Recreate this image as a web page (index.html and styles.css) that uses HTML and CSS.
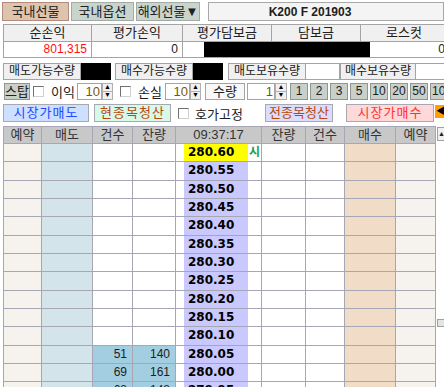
FILE: index.html
```html
<!DOCTYPE html>
<html lang="ko">
<head>
    <meta charset="UTF-8">
    <meta name="viewport" content="width=device-width, initial-scale=1.0">
    <title>선물 주문</title>
    <link rel="stylesheet" href="styles.css">
</head>
<body>

    <!-- Market tabs + code -->
    <div class="tabs">
        <div class="tab on">국내선물</div>
        <div class="tab opt">국내옵션</div>
        <div class="tab ovs">해외선물▼</div>
        <div class="code">K200 F 201903</div>
    </div>

    <!-- Account summary -->
    <div class="acct">
        <div class="hd">순손익</div>
        <div class="hd">평가손익</div>
        <div class="hd">평가담보금</div>
        <div class="hd">담보금</div>
        <div class="hd">로스컷</div>
        <div class="val red">801,315</div>
        <div class="val">0</div>
        <div class="val"></div>
        <div class="val"></div>
        <div class="val">0</div>
        <div class="mask"></div>
    </div>

    <!-- Available / held quantities -->
    <div class="qty">
        <div class="lbl">매도가능수량</div><div class="box dark"></div>
        <div class="lbl gap4">매수가능수량</div><div class="box dark"></div>
        <div class="lbl gap5">매도보유수량</div><div class="box w34"></div>
        <div class="lbl w76">매수보유수량</div><div class="box w40"></div>
    </div>

    <!-- Stop / quantity options -->
    <div class="opts">
        <div class="btn stop">스탑</div>
        <span class="chk c1"></span>
        <span class="txt t1">이익</span>
        <div class="field f1">10</div>
        <div class="spin"><span>▲</span><span>▼</span></div>
        <span class="chk c2"></span>
        <span class="txt t2">손실</span>
        <div class="field f2">10</div>
        <div class="spin"><span>▲</span><span>▼</span></div>
        <div class="tag">수량</div>
        <div class="field f3">1</div>
        <div class="spin s3"><span>▲</span><span>▼</span></div>
        <div class="steps">
            <div class="btn">1</div>
            <div class="btn">2</div>
            <div class="btn">3</div>
            <div class="btn">5</div>
            <div class="btn">10</div>
            <div class="btn">20</div>
            <div class="btn">50</div>
            <div class="btn">100</div>
        </div>
    </div>

    <!-- Order buttons -->
    <div class="orders">
        <div class="order sell">시장가매도</div>
        <div class="order cur">현종목청산</div>
        <span class="chk c3"></span>
        <span class="txt t3">호가고정</span>
        <div class="order all">전종목청산</div>
        <div class="order buy">시장가매수</div>
        <div class="side">◀</div>
    </div>

    <!-- Order book -->
    <div class="board">
        <div class="grid">
            <div class="h">예약</div><div class="h">매도</div><div class="h">건수</div><div class="h">잔량</div>
            <div class="h">09:37:17</div>
            <div class="h">잔량</div><div class="h">건수</div><div class="h">매수</div><div class="h">예약</div>

            <div class="rsv"></div><div class="ask"></div><div class="n"></div><div class="n"></div>
            <div class="px now"><b>280.60</b><i>시</i></div>
            <div class="n"></div><div class="n"></div><div class="bid"></div><div class="rsv"></div>

            <div class="rsv"></div><div class="ask"></div><div class="n"></div><div class="n"></div>
            <div class="px"><b>280.55</b><i></i></div>
            <div class="n"></div><div class="n"></div><div class="bid"></div><div class="rsv"></div>

            <div class="rsv"></div><div class="ask"></div><div class="n"></div><div class="n"></div>
            <div class="px"><b>280.50</b><i></i></div>
            <div class="n"></div><div class="n"></div><div class="bid"></div><div class="rsv"></div>

            <div class="rsv"></div><div class="ask"></div><div class="n"></div><div class="n"></div>
            <div class="px"><b>280.45</b><i></i></div>
            <div class="n"></div><div class="n"></div><div class="bid"></div><div class="rsv"></div>

            <div class="rsv"></div><div class="ask"></div><div class="n"></div><div class="n"></div>
            <div class="px"><b>280.40</b><i></i></div>
            <div class="n"></div><div class="n"></div><div class="bid"></div><div class="rsv"></div>

            <div class="rsv"></div><div class="ask"></div><div class="n"></div><div class="n"></div>
            <div class="px"><b>280.35</b><i></i></div>
            <div class="n"></div><div class="n"></div><div class="bid"></div><div class="rsv"></div>

            <div class="rsv"></div><div class="ask"></div><div class="n"></div><div class="n"></div>
            <div class="px"><b>280.30</b><i></i></div>
            <div class="n"></div><div class="n"></div><div class="bid"></div><div class="rsv"></div>

            <div class="rsv"></div><div class="ask"></div><div class="n"></div><div class="n"></div>
            <div class="px"><b>280.25</b><i></i></div>
            <div class="n"></div><div class="n"></div><div class="bid"></div><div class="rsv"></div>

            <div class="rsv"></div><div class="ask"></div><div class="n"></div><div class="n"></div>
            <div class="px"><b>280.20</b><i></i></div>
            <div class="n"></div><div class="n"></div><div class="bid"></div><div class="rsv"></div>

            <div class="rsv"></div><div class="ask"></div><div class="n"></div><div class="n"></div>
            <div class="px"><b>280.15</b><i></i></div>
            <div class="n"></div><div class="n"></div><div class="bid"></div><div class="rsv"></div>

            <div class="rsv"></div><div class="ask"></div><div class="n"></div><div class="n"></div>
            <div class="px"><b>280.10</b><i></i></div>
            <div class="n"></div><div class="n"></div><div class="bid"></div><div class="rsv"></div>

            <div class="rsv"></div><div class="ask"></div><div class="n hit">51</div><div class="n hit">140</div>
            <div class="px"><b>280.05</b><i></i></div>
            <div class="n"></div><div class="n"></div><div class="bid"></div><div class="rsv"></div>

            <div class="rsv"></div><div class="ask"></div><div class="n hit">69</div><div class="n hit">161</div>
            <div class="px"><b>280.00</b><i></i></div>
            <div class="n"></div><div class="n"></div><div class="bid"></div><div class="rsv"></div>

            <div class="rsv"></div><div class="ask"></div><div class="n hit">68</div><div class="n hit">148</div>
            <div class="px"><b>279.95</b><i></i></div>
            <div class="n"></div><div class="n"></div><div class="bid"></div><div class="rsv"></div>
        </div>
        <div class="scroll">
            <div class="up">▲</div>
            <div class="thumb"></div>
        </div>
    </div>

</body>
</html>
```

FILE: styles.css
```css
* { box-sizing: border-box; }
body {
    margin: 0;
    width: 444px;
    height: 387px;
    overflow: hidden;
    background: #fff;
    font-family: "Liberation Sans", "Noto Sans CJK KR", sans-serif;
    font-size: 12px;
    color: #202020;
}
.tabs > *, .qty > *, .opts > *, .orders > *, .steps > * { flex-shrink: 0; }

/* top tabs */
.tabs {
    display: flex;
    gap: 2px;
    padding: 2px 0 0 2px;
}
.tab, .code {
    height: 19px;
    display: flex;
    align-items: center;
    justify-content: center;
    line-height: 1;
}
.tab {
    width: 67px;
    font-size: 13px;
    background: #c9d4cd;
    border: 1px solid #a3aba5;
}
.tab.on { background: #dcc4af; border-color: #b48b7a; }
.tab.opt { width: 63px; }
.tab.ovs { width: 64px; }
.code {
    flex: 1;
    flex-shrink: 1;
    margin-left: 6px;
    background: #f4f4f4;
    border: 1px solid #a8a8a8;
    font-weight: bold;
    padding-right: 32px;
}

/* account summary */
.acct {
    position: relative;
    margin: 3px 0 0 3px;
    display: grid;
    grid-template-columns: 87px 90px 88px 88px 86px;
    grid-template-rows: 16px 15px;
    gap: 1px;
    padding: 1px;
    width: max-content;
    background: #a4a4a4;
}
.hd {
    background: #f0f0f0;
    text-align: center;
    line-height: 16px;
    font-size: 13px;
}
.val {
    background: #fff;
    text-align: right;
    padding-right: 4px;
    line-height: 15px;
    font-size: 12px;
}
.val:nth-child(10) { padding-right: 2px; }
.red { color: #ff1010; }
.mask {
    position: absolute;
    left: 201px;
    top: 18px;
    width: 166px;
    height: 15px;
    background: #000;
}

/* quantities */
.qty {
    display: flex;
    height: 17px;
    margin: 5px 0 0 3px;
}
.lbl {
    width: 78px;
    background: #f0f0f0;
    border: 1px solid #a4a4a4;
    text-align: center;
    line-height: 15px;
}
.lbl.gap4 { margin-left: 4px; }
.lbl.gap5 { margin-left: 5px; }
.lbl.w76 { width: 76px; }
.box {
    width: 30px;
    background: #fff;
    border: 1px solid #a4a4a4;
    border-left: 0;
}
.box.dark { background: #000; border-color: #000; }
.box.w34 { width: 34px; }
.box.w40 { width: 40px; }

/* options row */
.opts {
    display: flex;
    align-items: center;
    height: 17px;
    margin-top: 3px;
}
.btn {
    height: 17px;
    background: #c8d0c9;
    border: 1px solid #8f9890;
    text-align: center;
    line-height: 15px;
}
.stop { width: 26px; margin-left: 4px; font-size: 13px; }
.chk {
    width: 11px;
    height: 11px;
    background: #fff;
    border: 1px solid;
    border-color: #707070 #d0d0d0 #d0d0d0 #707070;
}
.c1 { margin-left: 3px; }
.c2 { margin-left: 7px; }
.c3 { margin-left: 7px; }
.txt { width: 24px; font-size: 13px; }
.t1 { margin-left: 7px; }
.t2 { margin-left: 7px; }
.t3 { margin-left: 6px; width: 52px; }
.field {
    height: 17px;
    width: 25px;
    background: #fff;
    border: 1px solid #a4a4a4;
    text-align: right;
    padding-right: 1px;
    line-height: 15px;
    color: #7a5a00;
    font-size: 13px;
}
.f1 { margin-left: 2px; }
.f2 { margin-left: 3px; }
.f3 { margin-left: 2px; width: 28px; }
.spin {
    width: 11px;
    height: 17px;
    display: flex;
    flex-direction: column;
}
.spin span {
    flex: 1;
    background: #f0f0f0;
    border: 1px solid #b0b0b0;
    font-size: 7px;
    line-height: 6px;
    text-align: center;
    color: #000;
}
.spin span + span { border-top: 0; }
.spin.s3 { width: 12px; }
.tag {
    width: 40px;
    height: 17px;
    margin-left: 4px;
    background: #f8f8f8;
    border: 1px solid #a4a4a4;
    text-align: center;
    line-height: 15px;
    font-size: 13px;
}
.steps {
    display: flex;
    gap: 2px;
    margin-left: 3px;
}
.steps .btn { width: 18px; }
.steps .btn:last-child { width: 24px; text-align: left; padding-left: 1px; }

/* order buttons */
.orders {
    display: flex;
    align-items: center;
    height: 18px;
    margin-top: 4px;
}
.order {
    height: 18px;
    border: 1px solid #a8a8b0;
    text-align: center;
    line-height: 16px;
    letter-spacing: 1px;
    font-size: 13px;
}
.sell { width: 86px; margin-left: 3px; background: #cde0ff; color: #2248ff; }
.cur { width: 77px; margin-left: 5px; background: #d8f8e9; color: #b8480a; }
.all { width: 68px; margin-left: 18px; background: #dcdcfc; color: #b8480a; letter-spacing: 0; }
.buy { width: 88px; margin-left: 13px; background: #ffd9d9; color: #ff3030; }
.side {
    width: 12px;
    height: 13px;
    margin-left: 1px;
    align-self: flex-start;
    margin-top: 1px;
    background: #ffa000;
    font-size: 9px;
    line-height: 13px;
    padding-left: 1px;
    color: #000;
}

/* order book */
.board {
    display: flex;
    margin: 4px 0 0 3px;
}
.grid {
    display: grid;
    grid-template-columns: 37px 50px 39px 42px 85px 43px 38px 50px 39px;
    grid-template-rows: 16px;
    grid-auto-rows: 17.333px;
    gap: 1px;
    padding: 1px;
    background: #a6a6b4;
}
.h {
    background: #c8c8c8;
    color: #333;
    text-align: center;
    line-height: 16px;
    font-size: 13px;
}
.rsv { background: #f6f3ef; }
.ask { background: #d3e4ea; }
.bid { background: #f1dcc8; }
.n {
    background: #fff;
    text-align: right;
    padding-right: 5px;
    font-size: 12px;
    line-height: 17px;
}
.n.hit { background: #a3cee2; }
.px {
    display: flex;
    background: #fff;
}
.px b {
    width: 64px;
    margin-left: 8px;
    padding-left: 4px;
    background: #c9c9ff;
    font-family: "DejaVu Sans", sans-serif;
    font-size: 12px;
    line-height: 17px;
    color: #000;
}
.px.now b { background: #ffff00; }
.px i {
    flex: 1;
    font-style: normal;
    font-weight: bold;
    color: #20a040;
    text-align: center;
    line-height: 17px;
}
.scroll {
    width: 9px;
    margin-left: 1px;
    background: #fff;
}
.up {
    height: 14px;
    margin-top: 1px;
    background: #f0f0f0;
    border: 1px solid #a0a0a0;
    font-size: 7px;
    line-height: 12px;
    text-align: center;
}
.thumb {
    width: 8px;
    height: 8px;
    margin-top: 178px;
    background: #e4e4e4;
    border: 1px solid #a0a0a0;
}
```
